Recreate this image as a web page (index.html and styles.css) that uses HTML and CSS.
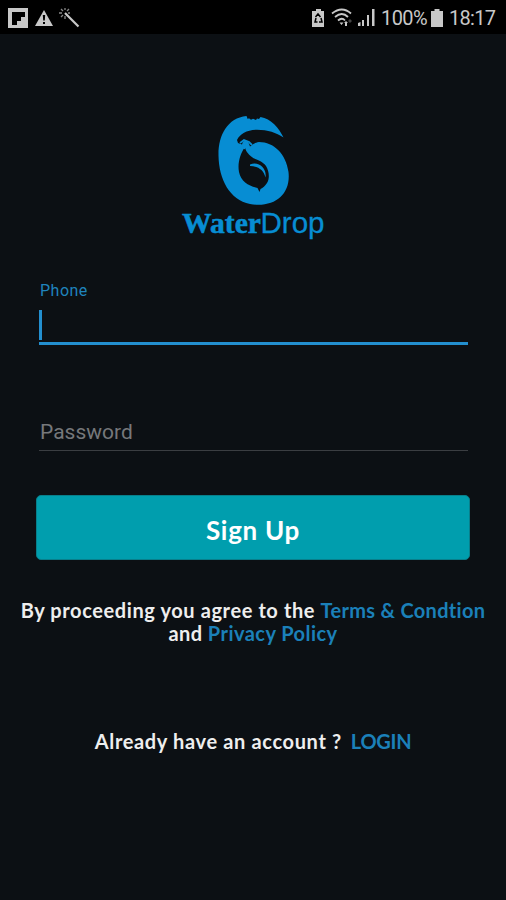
FILE: index.html
```html
<!DOCTYPE html>
<html lang="en">
<head>
    <meta charset="UTF-8">
    <meta name="viewport" content="width=device-width, initial-scale=1.0">
    <title>WaterDrop - Sign Up</title>
    <link rel="stylesheet" href="styles.css">
</head>
<body>
    <header class="status-bar">
        <svg class="status-left" width="74" height="22" viewBox="0 0 74 22">
            <path d="M0 0h20v20H0z"/>
            <path class="cutout" d="M4 4h13v5h-4v4H9v4H4z"/>
            <path d="M36 2l9 16H27z"/>
            <path class="cutout" d="M34.800 7h2.400l-.4 5.500h-1.600zM35 14h2v2h-2z"/>
            <path class="line" d="M57 5L70.500 18.500" stroke-width="2.200"/>
            <path class="line dim" d="M53 1l2 2M57 0v2M61 1l-2 2M51 5h3M53 9l2-2M57 8v3M60 5h2" stroke-width="1.300"/>
        </svg>
        <div class="status-right">
            <svg width="64" height="20" viewBox="0 0 64 20">
                <path d="M4 3V1h5v2h3v16H0V3z"/>
                <path class="cut-line" d="M3.500 9l2.500-3 2.500 3M9 10l1 4H7M5.500 14H3l1-4"/>
                <path class="line" d="M20 5.500q10-8 19 0M23 9q7-6 13 0M26 12.500q4-3.500 7 0" stroke-width="1.800"/>
                <path d="M29.500 17l-2-2.500h4zM34 13l2 2h-1v3h-2v-3h-1z"/>
                <path class="dim-fill" d="M38 11l2 2-2 2-2-2z"/>
                <path d="M46 18v-3l2.500-1v4zM50 18v-6h2v6zM55 18V7h2v11zM60 18V1h2.500v17z"/>
            </svg>
            <span class="percent">100%</span>
            <svg width="12" height="18" viewBox="0 0 12 18">
                <path d="M3.500 2V0h5v2H12v16H0V2z"/>
            </svg>
            <span class="clock">18:17</span>
        </div>
    </header>

    <main class="container">
        <svg class="logo" width="150" height="132" viewBox="0 0 150 132">
            <path fill-rule="evenodd" d="M105.500 28.500C101 19 93 9.500 82.500 8l-1.500 2-2-.5-1 1.500-3-1.200-2 1-2-1.500-1.300.8L68.500 7C49 9 40 27 40.500 47c.5 23 11 44 31.500 48 25 4 41-10 38.500-32C108 45 96 33 81 33c-4 .5-6 2.300-9 4.500l-1.500-4-2.500-2-3 1-1 3-4-1.500-1-3C62 25 69 20.800 79 20.800c11 0 19 3 26.500 7.700zM66.800 38C68 43 71 46 76 49.500c5.500 2 9 3.500 12 7.500 3 5 4 12 1 17-2 3-4 5-6.500 6l-1 3-2-4C71 77 63 73 61 63c-1.700-9 1.300-18 5.800-25z"/>
            <path d="M72 55.500c9-3.500 17 4 15.500 13C85.500 61 81 57.500 72 57z"/>
            <path class="stem" d="M62 34l4-3 5 2 3 3M67 33l-1 7"/>
            <text class="logo-water" x="4" y="124" textLength="79" lengthAdjust="spacingAndGlyphs">Water</text>
            <text class="logo-drop" x="82.500" y="124" textLength="64" lengthAdjust="spacingAndGlyphs">Drop</text>
        </svg>

        <form class="signup-form">
            <label class="phone-label" for="phone">Phone</label>
            <div class="phone-field" id="phone" role="textbox">
                <span class="caret"></span>
            </div>
            <input class="password-field" type="password" placeholder="Password">
            <button class="signup-btn" type="button">Sign Up</button>
        </form>

        <div class="terms">
            <p class="terms-line">By proceeding you agree to the <a href="#">Terms &amp; Condtion</a></p>
            <p class="privacy-line">and <a href="#">Privacy Policy</a></p>
        </div>

        <p class="login"><span>Already have an account ?</span><a href="#">LOGIN</a></p>
    </main>
</body>
</html>
```
FILE: styles.css
```css
* {
    margin: 0;
    padding: 0;
    box-sizing: border-box;
}

body {
    height: 900px;
    overflow: hidden;
    background: #0c1014;
    color: #eeeeee;
    font-family: Roboto, sans-serif;
}

.status-bar {
    display: flex;
    justify-content: space-between;
    height: 34px;
    padding: 8px 11px 0 8px;
    background: #000;
    color: #c8c8c8;
    fill: #c8c8c8;
}

.status-right {
    display: flex;
    height: 20px;
    align-items: center;
    font-size: 20px;
    line-height: 20px;
}

.percent {
    width: 46px;
    margin: 0 4px 0 5px;
    letter-spacing: -0.6px;
}

.clock {
    width: 46px;
    margin-left: 6px;
    letter-spacing: -0.7px;
}

.cutout {
    fill: #000;
}

.cut-line {
    fill: none;
    stroke: #000;
    stroke-width: 1.5;
}

.line {
    fill: none;
    stroke: #c8c8c8;
}

.dim {
    stroke: #888;
}

.dim-fill {
    fill: #444;
}

.container {
    display: flex;
    flex-direction: column;
    align-items: center;
    padding-top: 75px;
}

.logo {
    fill: #078dd3;
}

.stem {
    fill: none;
    stroke: #078dd3;
    stroke-width: 1.8;
}

.logo-water {
    font: bold 29px "Liberation Serif", serif;
    stroke: #078dd3;
    stroke-width: 0.5;
}

.logo-drop {
    font: 30px "Liberation Sans", sans-serif;
    stroke: #078dd3;
    stroke-width: 0.3;
}

.signup-form {
    display: flex;
    flex-direction: column;
    width: 434px;
    padding-top: 40px;
}

.phone-label {
    height: 20px;
    margin-left: 4px;
    color: #1f84bd;
    font-size: 16px;
    line-height: 20px;
    letter-spacing: 0.5px;
}

.phone-field {
    height: 44px;
    margin: 0 2px 0 3px;
    padding-top: 9px;
    border-bottom: 3px solid #238fcf;
}

.caret {
    display: block;
    width: 3px;
    height: 30px;
    background: #238fcf;
}

.password-field {
    height: 40px;
    margin: 66px 2px 0 3px;
    padding: 2px 0 0 1px;
    border: none;
    border-bottom: 1px solid #3b3e42;
    outline: none;
    background: transparent;
    color: #eee;
    font: 21px Roboto, sans-serif;
}

.password-field::placeholder {
    color: #76787b;
}

.signup-btn {
    height: 65px;
    margin-top: 44px;
    padding-top: 5px;
    border: 1px solid #087f8b;
    border-radius: 5px;
    background: #009eae;
    color: #fff;
    font: bold 26px Lato, sans-serif;
    letter-spacing: 0.7px;
}

.terms {
    padding-top: 39px;
    font: bold 20px/23px Lato, sans-serif;
    text-align: center;
    white-space: nowrap;
}

.terms-line {
    letter-spacing: 0.6px;
}

.terms-line a {
    letter-spacing: 0.3px;
}

.privacy-line {
    letter-spacing: 0.45px;
}

a {
    color: #1b80b9;
    text-decoration: none;
}

.login {
    display: flex;
    gap: 9px;
    margin-top: 84px;
    font: bold 20px/24px Lato, sans-serif;
}

.login span {
    letter-spacing: 0.65px;
}

.login a {
    letter-spacing: -0.3px;
}
```
